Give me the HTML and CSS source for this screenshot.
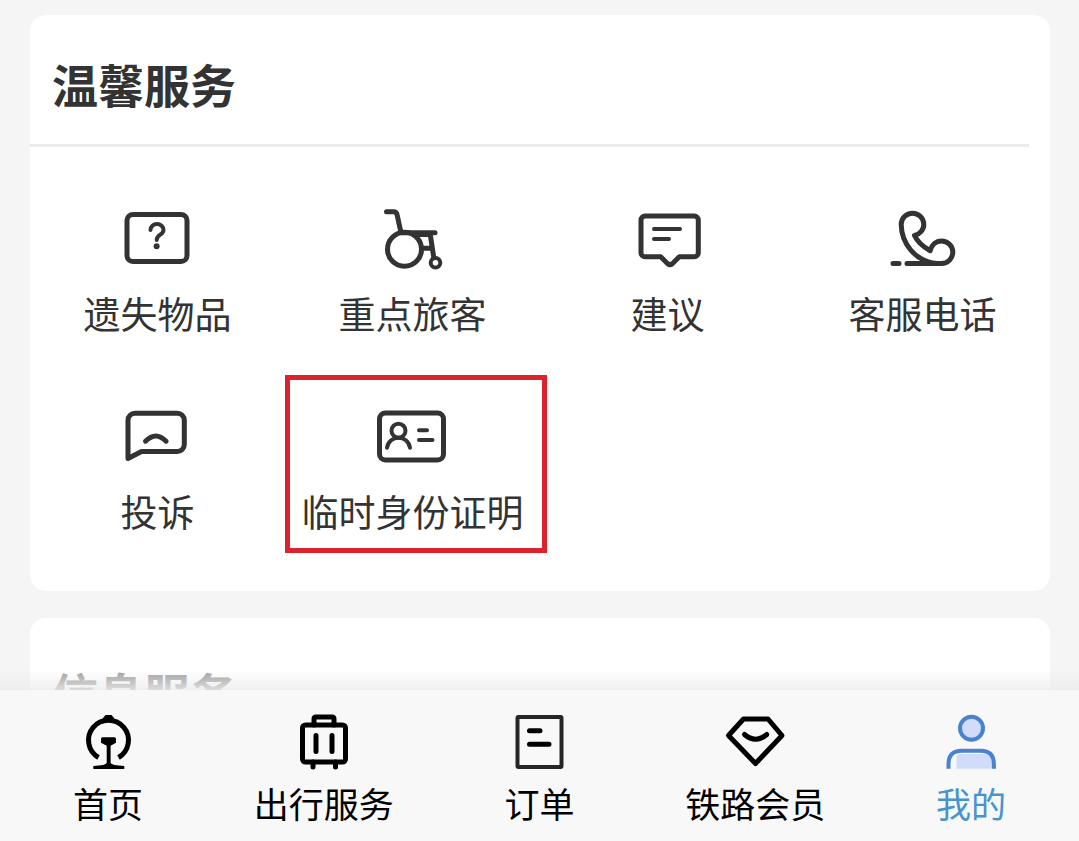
FILE: index.html
```html
<!DOCTYPE html>
<html lang="zh-CN">

<head>
    <meta charset="UTF-8">
    <meta name="viewport" content="width=device-width, initial-scale=1.0">
    <title>我的</title>
    <link rel="stylesheet" href="styles.css">
</head>

<body>

    <main>
        <section class="card">
            <h2 class="card-title">温馨服务</h2>
            <div class="services">
                <a class="service" href="#">
                    <svg viewBox="0 0 72 72">
                        <rect x="5" y="11.5" width="60" height="47" rx="6" />
                        <path d="M28.5 27a6.5 6 0 0 1 13 0c0 5-6.8 4.5-6.8 10" stroke-width="4" />
                        <circle class="solid" cx="34.6" cy="43.3" r="3" />
                    </svg>
                    <span>遗失物品</span>
                </a>
                <a class="service" href="#">
                    <svg viewBox="0 0 72 72">
                        <path d="M9.5 8.7h7q3 0 3.6 3L24 29.7h34M53 30l3.700 24M46 45.300h9" />
                        <path class="solid" d="M37 30h16v4H42z" />
                        <circle cx="27.500" cy="46.300" r="17" />
                        <circle cx="58.500" cy="59.700" r="4.800" stroke-width="4" />
                    </svg>
                    <span>重点旅客</span>
                </a>
                <a class="service" href="#">
                    <svg viewBox="0 0 72 72">
                        <path d="M13 13h49.300a4 4 0 0 1 4 4v32.700a4 4 0 0 1-4 4h-15l-7 7q-2.300 1.800-4.600 0l-7-7H13a4 4 0 0 1-4-4V17a4 4 0 0 1 4-4z" />
                        <path d="M22 26h26M22 36h15" stroke-width="4" />
                    </svg>
                    <span>建议</span>
                </a>
                <a class="service" href="#">
                    <svg viewBox="0 0 72 72">
                        <path d="M6 60.500h6M20 60.500h34.500a11.300 11.300 0 0 0 0-22.600c-5.500 0-10 4-11.300 9.800C36.500 44 30.500 39 27.500 32.500c5-1 9.300-5.500 9.300-11a11.300 11.300 0 0 0-22.600 0C14.500 40 27.500 58 49.500 60.500" />
                    </svg>
                    <span>客服电话</span>
                </a>
                <a class="service" href="#">
                    <svg viewBox="0 0 72 72">
                        <path d="M6 57.500V19.300a7 7 0 0 1 7-7h42.300a7 7 0 0 1 7 7v24.200a7 7 0 0 1-7 7H19.500z" />
                        <path d="M23.500 40.200q10.300-10.500 20.600 0" />
                    </svg>
                    <span>投诉</span>
                </a>
                <a class="service marked" href="#">
                    <svg viewBox="0 0 72 72">
                        <rect x="2.500" y="12" width="64" height="47" rx="6" />
                        <circle cx="21.500" cy="29.700" r="7" stroke-width="4" />
                        <path d="M10 46.800c2-13.500 21-13.500 23 0" stroke-width="4" />
                        <path d="M42 29.300h8M42 39h13.500" stroke-width="4" />
                    </svg>
                    <span>临时身份证明</span>
                </a>
            </div>
        </section>

        <section class="card">
            <h2 class="card-title next">信息服务</h2>
        </section>
    </main>

    <nav class="tabbar">
        <a class="tab" href="#">
            <svg viewBox="0 0 64 64">
                <path d="M22.500 47.500a20 20 0 1 1 20 0" stroke-width="5" stroke-linecap="butt" />
                <path class="solid" d="M29.500 5h6l2.500 3v3H27V8z" />
                <path class="solid" d="M26.500 27.300h12q1.500 0 1.500 1.500v4l-5.400 3V53q1 2.300 13.700 3v3H17.300v-3Q30 55.300 30.700 53V35.800l-5.700-3v-4q0-1.500 1.500-1.500z" />
            </svg>
            <span>首页</span>
        </a>
        <a class="tab" href="#">
            <svg viewBox="0 0 64 64">
                <rect x="10.500" y="15" width="43" height="37" rx="3" />
                <path d="M22 15V9q0-2 2-2h16q2 0 2 2v6M21 52v5M43.500 52v5" />
                <path d="M24 25.500v16M40 25.500v16" />
            </svg>
            <span>出行服务</span>
        </a>
        <a class="tab" href="#">
            <svg viewBox="0 0 64 64">
                <rect x="10.500" y="7" width="44" height="50" rx="1" stroke="#262626" stroke-width="4" />
                <path d="M22.500 20.700H33M22.500 34.200H42" />
            </svg>
            <span>订单</span>
        </a>
        <a class="tab" href="#">
            <svg viewBox="0 0 64 64">
                <path d="M20.500 9h24.500L59 25.500 32.500 53.500 5.500 25.500z" />
                <path d="M21.500 24.500q11 9.500 22.300 0" />
            </svg>
            <span>铁路会员</span>
        </a>
        <a class="tab active" href="#">
            <svg viewBox="0 0 64 64">
                <circle cx="32.500" cy="18.300" r="11.500" fill="#d0dcf8" />
                <path d="M17.500 58.700V48q0-4 4-4H46q7 0 7 7v7.700z" fill="#d0dcf8" stroke="none" />
                <path d="M9.500 58.700V54q0-13.300 13.300-13.300h18.800q13.300 0 13.300 13.300v4.700" stroke-linecap="butt" />
            </svg>
            <span>我的</span>
        </a>
    </nav>

</body>

</html>
```

FILE: styles.css
```css
* {
    margin: 0;
    padding: 0;
    box-sizing: border-box;
}

body {
    font-family: 'Noto Sans CJK SC', sans-serif;
    background: #f5f5f5;
    color: #333;
}

a {
    color: inherit;
    text-decoration: none;
}

main {
    display: flex;
    flex-direction: column;
    gap: 27px;
    padding: 15px 29px 0 30px;
}

.card {
    background: #fff;
    border-radius: 16px;
}

.card-title {
    margin-right: 21px;
    padding: 36px 22px 29px;
    font-size: 46px;
    line-height: 64px;
    font-weight: bold;
    border-bottom: 3px solid #ebebeb;
}

.card-title.next {
    padding-top: 42px;
    color: #a0a0a0;
    border-bottom: none;
}

.services {
    display: grid;
    grid-template-columns: repeat(4, 1fr);
    row-gap: 64px;
    padding: 56px 0;
}

.service {
    position: relative;
    display: flex;
    flex-direction: column;
    align-items: center;
    gap: 14px;
    font-size: 37px;
    line-height: 48px;
    white-space: nowrap;
}

svg {
    fill: none;
    stroke: currentColor;
    stroke-linecap: round;
    stroke-linejoin: round;
}

.solid {
    fill: currentColor;
    stroke: none;
}

.service svg {
    width: 72px;
    height: 72px;
    stroke-width: 5;
}

/* red frame around the highlighted entry */
.marked::after {
    content: "";
    position: absolute;
    top: -26px;
    right: -7px;
    bottom: -18px;
    left: 0;
    border: 5px solid #dc222c;
}

.tabbar {
    position: fixed;
    left: 0;
    right: 0;
    bottom: 0;
    display: flex;
    padding: 20px 0 16px;
    background: #f8f8f8;
    color: #000;
}

.tabbar::before {
    content: "";
    position: absolute;
    left: 0;
    right: 0;
    bottom: 100%;
    height: 20px;
    background: linear-gradient(to bottom, rgba(235, 235, 235, 0), rgba(235, 235, 235, 0.8));
}

.tab {
    flex: 1;
    display: flex;
    flex-direction: column;
    align-items: center;
    gap: 7px;
    font-size: 35px;
    line-height: 44px;
}

.tab svg {
    width: 64px;
    height: 64px;
    stroke-width: 5;
}

.tab.active {
    color: #4693cf;
}

.tab.active svg {
    color: #4a82d0;
    stroke-width: 4;
}
```
